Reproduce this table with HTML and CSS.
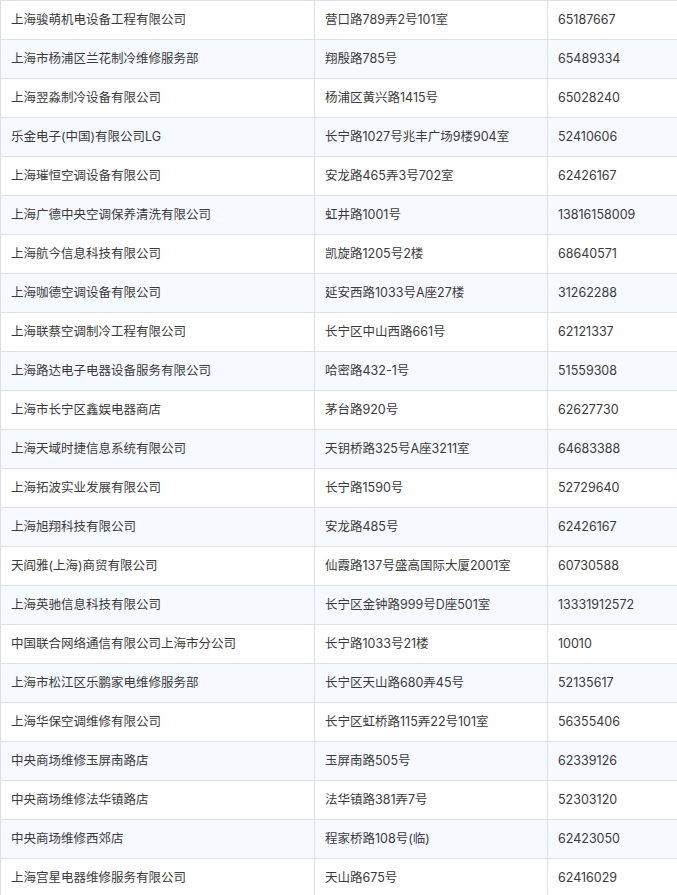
FILE: index.html
```html
<!DOCTYPE html>
<html lang="zh-CN">
<head>
<meta charset="utf-8">
<title>维修服务商列表</title>
<link rel="stylesheet" href="styles.css">
</head>
<body>
<table class="list">
<colgroup><col class="c1"><col class="c2"><col class="c3"></colgroup>
<tbody>
<tr><td>上海骏萌机电设备工程有限公司</td><td>营口路789弄2号101室</td><td>65187667</td></tr>
<tr><td>上海市杨浦区兰花制冷维修服务部</td><td>翔殷路785号</td><td>65489334</td></tr>
<tr><td>上海翌淼制冷设备有限公司</td><td>杨浦区黄兴路1415号</td><td>65028240</td></tr>
<tr><td>乐金电子(中国)有限公司LG</td><td>长宁路1027号兆丰广场9楼904室</td><td>52410606</td></tr>
<tr><td>上海璀恒空调设备有限公司</td><td>安龙路465弄3号702室</td><td>62426167</td></tr>
<tr><td>上海广德中央空调保养清洗有限公司</td><td>虹井路1001号</td><td>13816158009</td></tr>
<tr><td>上海航今信息科技有限公司</td><td>凯旋路1205号2楼</td><td>68640571</td></tr>
<tr><td>上海咖德空调设备有限公司</td><td>延安西路1033号A座27楼</td><td>31262288</td></tr>
<tr><td>上海联蔡空调制冷工程有限公司</td><td>长宁区中山西路661号</td><td>62121337</td></tr>
<tr><td>上海路达电子电器设备服务有限公司</td><td>哈密路432-1号</td><td>51559308</td></tr>
<tr><td>上海市长宁区鑫娱电器商店</td><td>茅台路920号</td><td>62627730</td></tr>
<tr><td>上海天域时捷信息系统有限公司</td><td>天钥桥路325号A座3211室</td><td>64683388</td></tr>
<tr><td>上海拓波实业发展有限公司</td><td>长宁路1590号</td><td>52729640</td></tr>
<tr><td>上海旭翔科技有限公司</td><td>安龙路485号</td><td>62426167</td></tr>
<tr><td>天阎雅(上海)商贸有限公司</td><td>仙霞路137号盛高国际大厦2001室</td><td>60730588</td></tr>
<tr><td>上海英驰信息科技有限公司</td><td>长宁区金钟路999号D座501室</td><td>13331912572</td></tr>
<tr><td>中国联合网络通信有限公司上海市分公司</td><td>长宁路1033号21楼</td><td>10010</td></tr>
<tr><td>上海市松江区乐鹏家电维修服务部</td><td>长宁区天山路680弄45号</td><td>52135617</td></tr>
<tr><td>上海华保空调维修有限公司</td><td>长宁区虹桥路115弄22号101室</td><td>56355406</td></tr>
<tr><td>中央商场维修玉屏南路店</td><td>玉屏南路505号</td><td>62339126</td></tr>
<tr><td>中央商场维修法华镇路店</td><td>法华镇路381弄7号</td><td>52303120</td></tr>
<tr><td>中央商场维修西郊店</td><td>程家桥路108号(临)</td><td>62423050</td></tr>
<tr><td>上海宫星电器维修服务有限公司</td><td>天山路675号</td><td>62416029</td></tr>
</tbody>
</table>
</body>
</html>
```
FILE: styles.css
```css
html, body {
  margin: 0;
  padding: 0;
  background: #ffffff;
}
.list {
  border-collapse: collapse;
  table-layout: fixed;
  width: 677px;
  font-family: Inter, "Noto Sans CJK SC", sans-serif;
  font-size: 12.5px;
  color: #3a3a3a;
}
.c1 { width: 314px; }
.c2 { width: 233px; }
.c3 { width: 130px; }
.list tr {
  height: 39px;
}
.list td {
  border: 1px solid #dcdfe6;
  padding: 0 10px;
  vertical-align: middle;
  white-space: nowrap;
  line-height: 18px;
}
.list tr:nth-child(even) td {
  background: #f6f9ff;
}
```
